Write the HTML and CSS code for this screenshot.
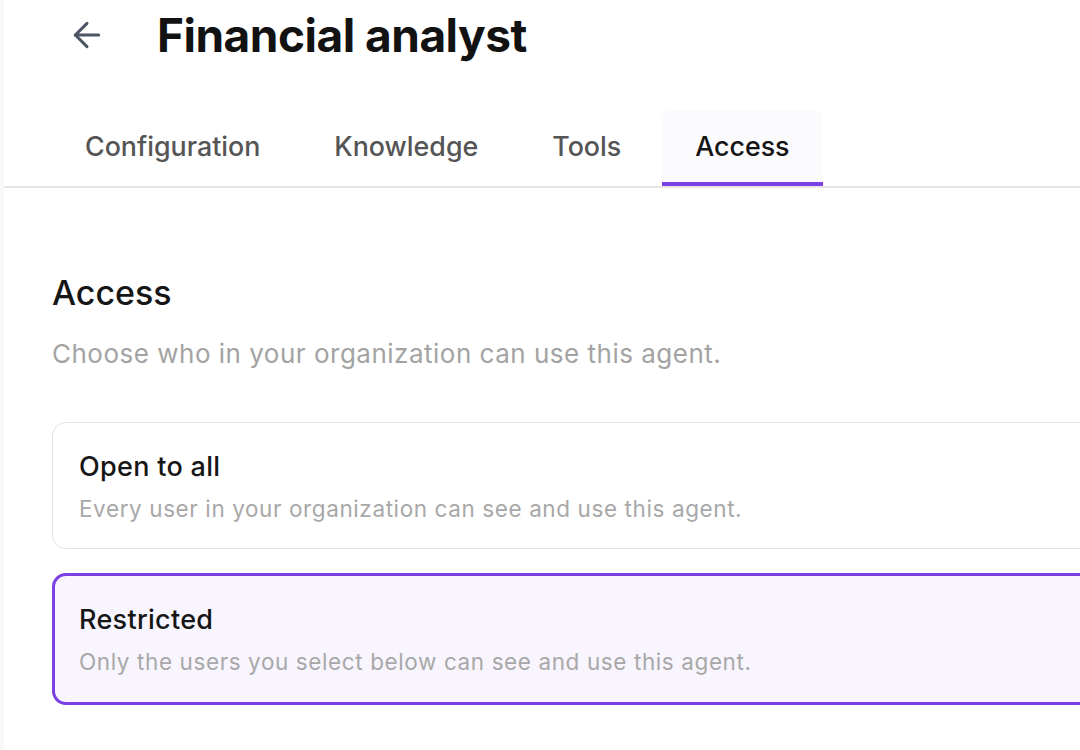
FILE: index.html
```html
<!DOCTYPE html>
<html lang="en">
<head>
<meta charset="utf-8">
<title>Financial analyst</title>
<link rel="stylesheet" href="styles.css">
</head>
<body>
<div class="app">
  <aside class="rail"></aside>
  <main class="main">
    <header class="header">
      <button class="back" aria-label="Back">
        <svg width="40" height="40" viewBox="0 0 24 24" fill="none" stroke="currentColor" stroke-width="1.8" stroke-linecap="round" stroke-linejoin="round"><path d="M19 12H5"/><path d="M12 19l-7-7 7-7"/></svg>
      </button>
      <h1 class="title">Financial analyst</h1>
    </header>
    <nav class="tabs">
      <div class="tab">Configuration</div>
      <div class="tab">Knowledge</div>
      <div class="tab">Tools</div>
      <div class="tab active">Access</div>
    </nav>
    <section class="content">
      <h2 class="section-title">Access</h2>
      <p class="section-desc">Choose who in your organization can use this agent.</p>
      <div class="options">
        <div class="option">
          <div class="option-title">Open to all</div>
          <div class="option-desc">Every user in your organization can see and use this agent.</div>
        </div>
        <div class="option selected">
          <div class="option-title">Restricted</div>
          <div class="option-desc">Only the users you select below can see and use this agent.</div>
        </div>
      </div>
    </section>
  </main>
</div>
</body>
</html>
```

FILE: styles.css
```css
html, body {
  margin: 0;
  padding: 0;
  background: #ffffff;
  font-family: Inter, "Liberation Sans", sans-serif;
  color: #1a1a1a;
  overflow: hidden;
}
.app {
  display: flex;
  min-height: 750px;
}
.rail {
  width: 4px;
  flex: 0 0 4px;
  background: #f8f8f8;
}
.main {
  flex: 1;
  min-width: 0;
}
.header {
  display: flex;
  align-items: center;
  height: 66px;
  padding-left: 63px;
  margin-top: 2px;
}
.back {
  display: flex;
  align-items: center;
  justify-content: center;
  width: 40px;
  height: 40px;
  padding: 0;
  border: none;
  background: none;
  color: #4b5563;
  margin-right: 50px;
}
.title {
  margin: 0;
  font-size: 46px;
  font-weight: 700;
  letter-spacing: -0.5px;
  color: #121212;
}
.tabs {
  display: flex;
  gap: 8px;
  padding-left: 48px;
  margin-top: 42px;
  border-bottom: 2px solid #e6e6e6;
}
.tab {
  padding: 0 33px;
  height: 72px;
  display: flex;
  align-items: center;
  font-size: 26.8px;
  font-weight: 500;
  color: #555555;
  border-radius: 10px 10px 0 0;
  border-bottom: 4px solid transparent;
}
.tab.active {
  color: #141414;
  background: #fbfafc;
  border-bottom-color: #7b3fe4;
}
.content {
  padding: 0 0 0 48px;
}
.section-title {
  margin: 85px 0 0;
  font-size: 34px;
  font-weight: 500;
  line-height: 40px;
  color: #161616;
}
.section-desc {
  margin: 25px 0 0;
  font-size: 26px;
  line-height: 32px;
  letter-spacing: 0.5px;
  color: #a3a3a3;
}
.options {
  margin-top: 52px;
  margin-right: -40px;
  display: flex;
  flex-direction: column;
  gap: 24px;
}
.option {
  border: 1px solid #e2e2e2;
  border-radius: 14px;
  padding: 28px 26px 25px;
  background: #fff;
}
.option.selected {
  border: 3px solid #7b3fe4;
  background: #f8f5fe;
  padding: 28px 24px 26px;
}
.option-title {
  font-size: 27px;
  font-weight: 500;
  line-height: 32px;
  letter-spacing: 0.3px;
  color: #161616;
}
.option-desc {
  margin-top: 12px;
  font-size: 22.5px;
  line-height: 28px;
  letter-spacing: 0.6px;
  color: #a8a8a8;
}
```
